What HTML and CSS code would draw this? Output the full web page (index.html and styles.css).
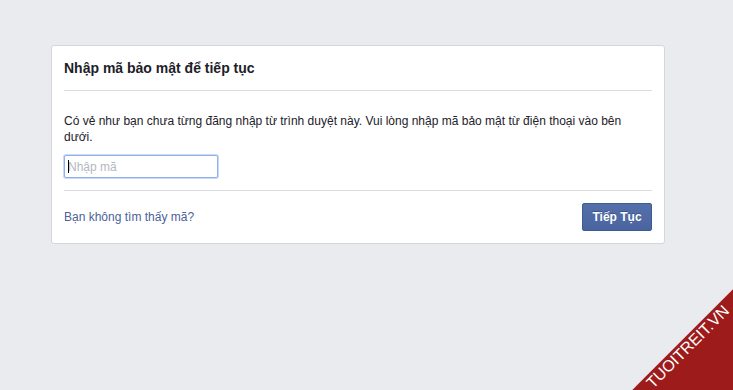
FILE: index.html
```html
<!DOCTYPE html>
<html lang="vi">
<head>
    <meta charset="UTF-8">
    <title>Nhập mã bảo mật</title>
    <link rel="stylesheet" href="styles.css">
</head>
<body>

<!-- Security code card -->
<div class="page">
    <div class="card">
        <div class="card-header">
            <h2>Nhập mã bảo mật để tiếp tục</h2>
        </div>
        <div class="card-body">
            <p>Có vẻ như bạn chưa từng đăng nhập từ trình duyệt này. Vui lòng nhập mã bảo mật từ điện thoại vào bên dưới.</p>
            <div class="code-field">
                <input type="text" class="code-input" placeholder="Nhập mã">
                <span class="caret"></span>
            </div>
        </div>
        <div class="card-footer">
            <a href="#" class="help-link">Bạn không tìm thấy mã?</a>
            <button class="continue-btn">Tiếp Tục</button>
        </div>
    </div>
</div>

<!-- Watermark corner -->
<div class="ribbon">TUOITREIT.VN</div>

</body>
</html>
```

FILE: styles.css
```css
* {
    margin: 0;
    padding: 0;
    box-sizing: border-box;
}

html, body {
    height: 100%;
}

body {
    background-color: #e9ebee;
    font-family: "Liberation Sans", Arial, sans-serif;
    font-size: 12px;
    color: #1d2129;
    overflow: hidden;
    position: relative;
}

.page {
    padding: 45px 0 0 51px;
}

.card {
    width: 614px;
    background: #fff;
    border: 1px solid #d3d6db;
    border-radius: 3px;
}

.card-header {
    margin: 0 12px;
    padding: 12px 0;
    border-bottom: 1px solid #dadde1;
}

.card-header h2 {
    font-size: 14px;
    line-height: 20px;
    font-weight: bold;
    color: #1d2129;
}

.card-body {
    margin: 0 12px;
    padding: 22px 0 12px;
    border-bottom: 1px solid #dadde1;
}

.card-body p {
    line-height: 16px;
    margin-bottom: 10px;
}

.code-field {
    position: relative;
    width: 154px;
}

.code-input {
    display: block;
    width: 154px;
    height: 23px;
    padding: 0 3px;
    border: 1px solid #8eb1ea;
    box-shadow: 0 0 0 1px #c9dbf6;
    border-radius: 2px;
    font-family: "Liberation Sans", Arial, sans-serif;
    font-size: 12px;
    color: #1d2129;
    outline: none;
}

.code-input::placeholder {
    color: #b4b8bf;
}

.caret {
    position: absolute;
    left: 4px;
    top: 5px;
    width: 1px;
    height: 13px;
    background: #000;
}

.card-footer {
    display: flex;
    justify-content: space-between;
    align-items: center;
    padding: 12px;
}

.help-link {
    color: #4b5f9a;
    text-decoration: none;
}

.continue-btn {
    width: 70px;
    height: 28px;
    background: linear-gradient(#5470aa, #4a64a0);
    border: 1px solid #3f5a8e;
    border-radius: 2px;
    color: #fff;
    font-family: "Liberation Sans", Arial, sans-serif;
    font-size: 12px;
    font-weight: bold;
    text-shadow: 0 -1px 0 #3a5488;
    cursor: pointer;
}

/* Watermark */
.ribbon {
    position: absolute;
    left: 567px;
    top: 326px;
    width: 300px;
    height: 100px;
    padding-top: 0;
    line-height: 17px;
    background: #9e1b1b;
    color: #fff;
    font-family: "Liberation Sans", Arial, sans-serif;
    font-size: 16px;
    text-align: center;
    transform: rotate(-45deg);
}
```
